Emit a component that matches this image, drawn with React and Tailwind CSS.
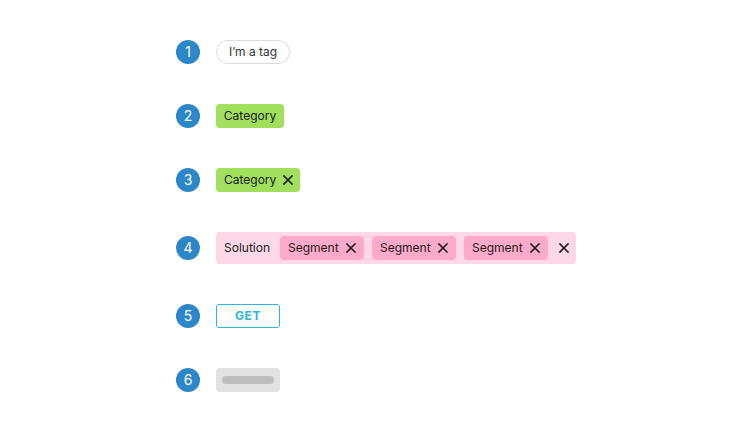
import React from "react";

const X = ({ className = "" }) => (
  <svg width="10" height="10" viewBox="0 0 10 10" className={className} fill="none">
    <path d="M1 1L9 9M9 1L1 9" stroke="#1a1a1a" strokeWidth="1.6" strokeLinecap="square" />
  </svg>
);

const Num = ({ n }) => (
  <div className="w-6 h-6 rounded-full bg-[#2c87c9] text-white flex items-center justify-center text-[14px] leading-none shrink-0">
    {n}
  </div>
);

const Row = ({ n, children }) => (
  <div className="flex items-center gap-4">
    <Num n={n} />
    {children}
  </div>
);

const Segment = () => (
  <div className="h-6 w-[84px] flex items-center gap-[7px] pl-2 rounded-[4px] bg-[#ffa9cb] text-[12px] text-[#1a1a1a]">
    <span>Segment</span>
    <X />
  </div>
);

export default function App() {
  return (
    <div
      className="w-[752px] h-[430px] bg-white pt-10 pl-[176px] flex flex-col gap-10"
      style={{ fontFamily: "Inter, 'Noto Sans', sans-serif" }}
    >
      <Row n={1}>
        <div className="h-6 w-[74px] flex items-center justify-center rounded-full border border-[#dcdcdc] text-[12px] text-[#333]">
          I’m a tag
        </div>
      </Row>
      <Row n={2}>
        <div className="h-6 w-[68px] flex items-center justify-center rounded-[4px] bg-[#a0e05c] text-[12px] text-[#1a1a1a]">
          Category
        </div>
      </Row>
      <Row n={3}>
        <div className="h-6 w-[84px] flex items-center gap-[7px] pl-2 rounded-[4px] bg-[#a0e05c] text-[12px] text-[#1a1a1a]">
          <span>Category</span>
          <X />
        </div>
      </Row>
      <Row n={4}>
        <div className="h-8 w-[360px] flex items-center gap-2 pl-2 rounded-[4px] bg-[#ffd8e7] text-[12px] text-[#1a1a1a]">
          <span className="w-12">Solution</span>
          <Segment />
          <Segment />
          <Segment />
          <X className="ml-[3px]" />
        </div>
      </Row>
      <Row n={5}>
        <div className="h-6 w-16 flex items-center justify-center rounded-[3px] border border-[#2bb6da] text-[12px] font-bold text-[#2bb6da] tracking-[0.5px]">
          GET
        </div>
      </Row>
      <Row n={6}>
        <div className="h-6 w-16 flex items-center justify-center rounded-[4px] bg-[#e2e2e2]">
          <div className="h-2 w-[52px] rounded-full bg-[#bdbdbd]" />
        </div>
      </Row>
    </div>
  );
}
